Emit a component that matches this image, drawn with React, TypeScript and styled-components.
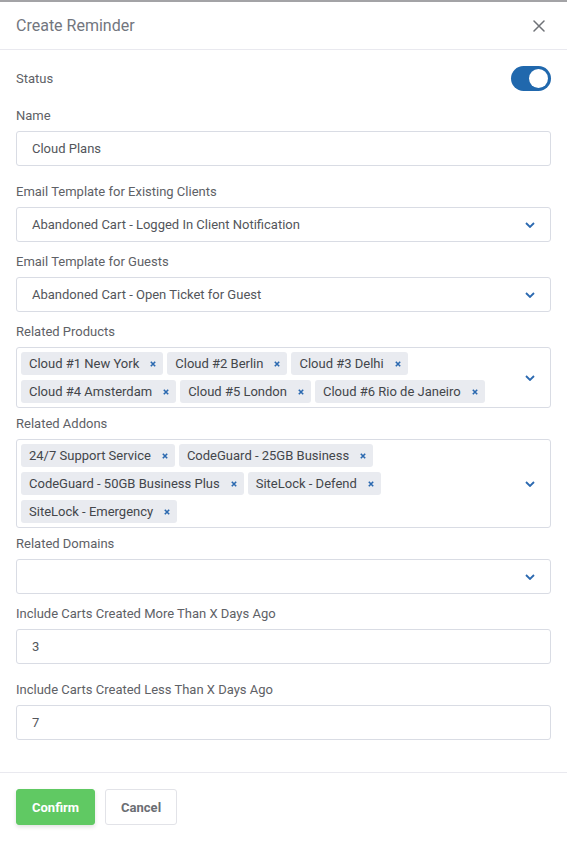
import React from "react";
import styled, { createGlobalStyle } from "styled-components";

const GlobalStyle = createGlobalStyle`
  *, *::before, *::after {
    box-sizing: border-box;
  }
  html, body {
    margin: 0;
    padding: 0;
    background: #ffffff;
  }
  body {
    font-family: Roboto, "Liberation Sans", Arial, sans-serif;
  }
`;

const Modal = styled.div`
  width: 567px;
  min-height: 841px;
  background: #ffffff;
  border-top: 2px solid #a3a3a6;
  display: flex;
  flex-direction: column;
`;

const Header = styled.div`
  height: 48px;
  padding: 0 16px;
  display: flex;
  align-items: center;
  justify-content: space-between;
  border-bottom: 1px solid #e9e9ef;
`;

const Title = styled.h4`
  margin: 0;
  font-size: 16px;
  font-weight: 400;
  color: #72767e;
`;

const CloseButton = styled.button`
  width: 24px;
  height: 24px;
  padding: 0;
  border: none;
  background: transparent;
  display: flex;
  align-items: center;
  justify-content: center;
  cursor: pointer;
`;

const Body = styled.div`
  padding: 16px 16px 32px;
  display: flex;
  flex-direction: column;
`;

const StatusRow = styled.div`
  height: 25px;
  margin-bottom: 15px;
  display: flex;
  align-items: center;
  justify-content: space-between;
`;

const Label = styled.label`
  display: block;
  height: 20px;
  line-height: 20px;
  font-size: 13px;
  color: #5e6166;
`;

const Toggle = styled.div<{ $on: boolean }>`
  position: relative;
  width: 40px;
  height: 25px;
  border-radius: 13px;
  background: ${(p) => (p.$on ? "#2068ad" : "#c9ccd3")};
  &::after {
    content: "";
    position: absolute;
    top: 3px;
    ${(p) => (p.$on ? "right: 3px;" : "left: 3px;")}
    width: 19px;
    height: 19px;
    border-radius: 50%;
    background: #ffffff;
  }
`;

const Group = styled.div<{ $gap: number }>`
  display: flex;
  flex-direction: column;
  margin-bottom: ${(p) => p.$gap}px;
  &:last-child {
    margin-bottom: 0;
  }
  ${Label} {
    margin-bottom: 5px;
  }
`;

const Field = styled.div`
  height: 35px;
  padding: 0 15px;
  border: 1px solid #d9dce4;
  border-radius: 3px;
  display: flex;
  align-items: center;
  justify-content: space-between;
  font-size: 13px;
  color: #53565b;
`;

const MultiField = styled.div`
  padding: 4px 15px 4px 4px;
  border: 1px solid #d9dce4;
  border-radius: 3px;
  display: flex;
  align-items: center;
  gap: 8px;
`;

const Tags = styled.div`
  flex: 1;
  display: flex;
  flex-wrap: wrap;
  gap: 5px 4px;
`;

const Tag = styled.span`
  height: 23px;
  padding: 0 7px 0 8px;
  border-radius: 3px;
  background: #e9ebf0;
  display: inline-flex;
  align-items: center;
  gap: 11px;
  font-size: 13px;
  color: #43464b;
`;

const Footer = styled.div`
  border-top: 1px solid #e9e9ef;
  padding: 16px;
  display: flex;
  gap: 10px;
`;

const Button = styled.button<{ $primary?: boolean }>`
  height: 36px;
  padding: 0 15px;
  border-radius: 3px;
  font-family: inherit;
  font-size: 13px;
  font-weight: 700;
  cursor: pointer;
  border: 1px solid ${(p) => (p.$primary ? "#60c963" : "#e2e3e8")};
  background: ${(p) => (p.$primary ? "#60c963" : "#ffffff")};
  color: ${(p) => (p.$primary ? "#ffffff" : "#6b6e73")};
  box-shadow: ${(p) => (p.$primary ? "0 2px 4px rgba(0, 0, 0, 0.12)" : "none")};
`;

const CloseIcon = () => (
  <svg width="12" height="12" viewBox="0 0 12 12">
    <path d="M1 1 L11 11 M11 1 L1 11" stroke="#6f7277" strokeWidth="1.5" strokeLinecap="round" />
  </svg>
);

const Chevron = () => (
  <svg width="10" height="6" viewBox="0 0 10 6">
    <path d="M1 1 L5 5 L9 1" stroke="#2b69b0" strokeWidth="1.8" fill="none" />
  </svg>
);

const RemoveIcon = () => (
  <svg width="6" height="6" viewBox="0 0 6 6">
    <path d="M0.8 0.8 L5.2 5.2 M5.2 0.8 L0.8 5.2" stroke="#2b69b0" strokeWidth="1.6" />
  </svg>
);

const products = [
  "Cloud #1 New York",
  "Cloud #2 Berlin",
  "Cloud #3 Delhi",
  "Cloud #4 Amsterdam",
  "Cloud #5 London",
  "Cloud #6 Rio de Janeiro",
];

const addons = [
  "24/7 Support Service",
  "CodeGuard - 25GB Business",
  "CodeGuard - 50GB Business Plus",
  "SiteLock - Defend",
  "SiteLock - Emergency",
];

const MultiSelect: React.FC<{ items: string[] }> = ({ items }) => (
  <MultiField>
    <Tags>
      {items.map((item) => (
        <Tag key={item}>
          {item}
          <RemoveIcon />
        </Tag>
      ))}
    </Tags>
    <Chevron />
  </MultiField>
);

const App: React.FC = () => {
  return (
    <>
      <GlobalStyle />
      <Modal>
        <Header>
          <Title>Create Reminder</Title>
          <CloseButton>
            <CloseIcon />
          </CloseButton>
        </Header>
        <Body>
          <StatusRow>
            <Label>Status</Label>
            <Toggle $on />
          </StatusRow>
          <Group $gap={16}>
            <Label>Name</Label>
            <Field>Cloud Plans</Field>
          </Group>
          <Group $gap={10}>
            <Label>Email Template for Existing Clients</Label>
            <Field>
              Abandoned Cart - Logged In Client Notification
              <Chevron />
            </Field>
          </Group>
          <Group $gap={10}>
            <Label>Email Template for Guests</Label>
            <Field>
              Abandoned Cart - Open Ticket for Guest
              <Chevron />
            </Field>
          </Group>
          <Group $gap={6}>
            <Label>Related Products</Label>
            <MultiSelect items={products} />
          </Group>
          <Group $gap={6}>
            <Label>Related Addons</Label>
            <MultiSelect items={addons} />
          </Group>
          <Group $gap={10}>
            <Label>Related Domains</Label>
            <Field>
              <span />
              <Chevron />
            </Field>
          </Group>
          <Group $gap={16}>
            <Label>Include Carts Created More Than X Days Ago</Label>
            <Field>3</Field>
          </Group>
          <Group $gap={16}>
            <Label>Include Carts Created Less Than X Days Ago</Label>
            <Field>7</Field>
          </Group>
        </Body>
        <Footer>
          <Button $primary>Confirm</Button>
          <Button>Cancel</Button>
        </Footer>
      </Modal>
    </>
  );
};

export default App;
